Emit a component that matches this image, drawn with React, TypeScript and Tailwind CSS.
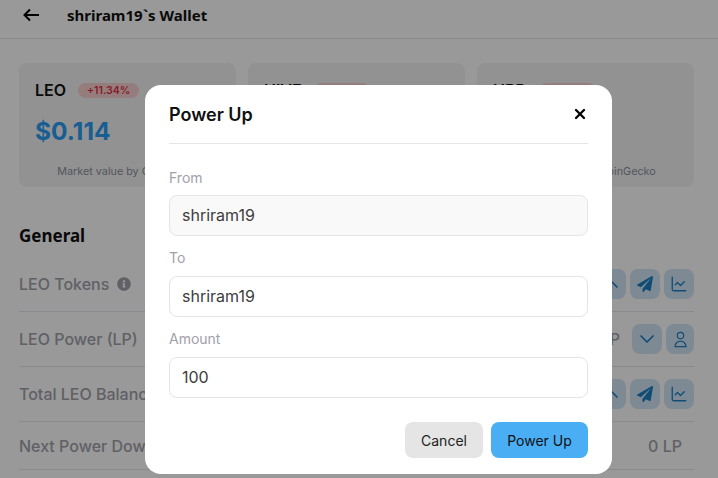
import React from "react";
import { ChevronDown, ChevronUp, ChartLine, X } from "lucide-react";
import { FaPaperPlane, FaInfoCircle } from "react-icons/fa";
import { HiOutlineUser } from "react-icons/hi";

const IconBtn = ({ children, w = "w-[30px]" }: { children: React.ReactNode; w?: string }) => (
  <div className={`flex h-[30px] ${w} items-center justify-center rounded-lg bg-[#d3e6f5] text-[#1d7fc4]`}>{children}</div>
);

const Card = ({ name, pct, price }: { name: string; pct: string; price: string }) => (
  <div className="flex h-[124px] flex-1 flex-col rounded-lg bg-[#f3f4f6] px-4 pt-[17px]">
    <div className="flex items-center gap-3">
      <span className="text-[16px] leading-[20px] font-semibold text-[#111]">{name}</span>
      <span className="rounded-full bg-[#f8d0d3] px-[9px] text-[10.5px] leading-[15px] font-semibold text-[#e0323f]">{pct}</span>
    </div>
    <div className="mt-[15px] text-[24.5px] leading-[32px] font-bold text-[#2a9df4]">{price}</div>
    <div className="mt-[18px] text-center text-[10.8px] leading-[14px] text-[#8b8f98]">Market value by CoinGecko</div>
  </div>
);

const Actions = () => (
  <div className="flex gap-1">
    <IconBtn><ChevronUp size={24} strokeWidth={1.75} /></IconBtn>
    <IconBtn><FaPaperPlane size={16} /></IconBtn>
    <IconBtn><ChartLine size={18} strokeWidth={1.75} /></IconBtn>
  </div>
);

const Row = ({ label, h, info, children }: { label: string; h: string; info?: boolean; children: React.ReactNode }) => (
  <div className={`flex ${h} items-center justify-between border-b border-[#e5e7eb]`}>
    <div className="flex items-center gap-2 text-[16px] font-medium text-[#a1a1aa]">
      {label}
      {info && <FaInfoCircle size={14} />}
    </div>
    <div className="flex items-center gap-3 text-[16px] font-medium text-[#a1a1aa]">{children}</div>
  </div>
);

const Field = ({ label, value, muted, className = "" }: { label: string; value: string; muted?: boolean; className?: string }) => (
  <div className={className}>
    <div className="text-[14px] leading-[20px] text-[#a1a1aa]">{label}</div>
    <div className={`flex h-[41px] items-center rounded-lg border border-[#e5e5e5] px-3 pb-px text-[16px] text-[#3d3d3d] ${muted ? "mt-[7px] bg-[#f9f9f9]" : "mt-2 bg-white"}`}>{value}</div>
  </div>
);

export default function App() {
  return (
    <div className="relative h-[478px] w-[718px] overflow-hidden bg-white font-['Inter',sans-serif]">
      <div className="flex h-[39px] items-center gap-[24px] border-b border-[#e5e7eb] pb-[8px] pl-[23px]">
        <svg width="20" height="14" viewBox="0 0 20 14" fill="none" stroke="black" strokeWidth="2">
          <path d="M16 7H1.5M7 1.5 1.5 7 7 12.5" />
        </svg>
        <span className="font-['Noto_Sans',sans-serif] text-[15px] font-bold text-[#111]">shriram19`s Wallet</span>
      </div>
      <div className="pr-[24px] pl-[19px]">
        <div className="mt-6 flex gap-3">
          <Card name="LEO" pct="+11.34%" price="$0.114" />
          <Card name="HIVE" pct="+3.21%" price="$0.311" />
          <Card name="HBD" pct="+1.02%" price="$1.00" />
        </div>
        <h2 className="mt-[37px] mb-[9px] font-['Noto_Sans',sans-serif] text-[17px] leading-[24px] font-bold text-[#111]">General</h2>
        <Row label="LEO Tokens" h="h-[55px]" info><span>0 LEO</span><Actions /></Row>
        <Row label="LEO Power (LP)" h="h-[55px]">
          <span>100 LP</span>
          <div className="flex gap-1">
            <IconBtn><ChevronDown size={24} strokeWidth={1.75} /></IconBtn>
            <IconBtn w="w-[28px]"><HiOutlineUser size={19} style={{ strokeWidth: 1.5 }} /></IconBtn>
          </div>
        </Row>
        <Row label="Total LEO Balance" h="h-[55px]"><span>0 LEO</span><Actions /></Row>
        <Row label="Next Power Down" h="h-[48px]"><span className="pr-3">0 LP</span></Row>
      </div>

      <div className="absolute inset-0 bg-black/40">
        <div className="absolute top-[85px] left-[145px] h-[389px] w-[467px] rounded-2xl bg-white px-6">
          <div className="flex h-[59px] items-center justify-between border-b border-[#e5e5e5]">
            <span className="text-[18px] font-semibold text-[#111]">Power Up</span>
            <X size={16} strokeWidth={3.5} className="text-black" />
          </div>
          <Field className="mt-6" label="From" value="shriram19" muted />
          <Field className="mt-3" label="To" value="shriram19" />
          <Field className="mt-3" label="Amount" value="100" />
          <div className="mt-6 flex justify-end gap-2">
            <button className="h-[36px] w-[78px] rounded-lg bg-[#e5e5e5] text-[14px] text-[#222]">Cancel</button>
            <button className="h-[36px] w-[97px] rounded-lg bg-[#4aaef5] text-[14px] text-[#111]">Power Up</button>
          </div>
        </div>
      </div>
    </div>
  );
}
